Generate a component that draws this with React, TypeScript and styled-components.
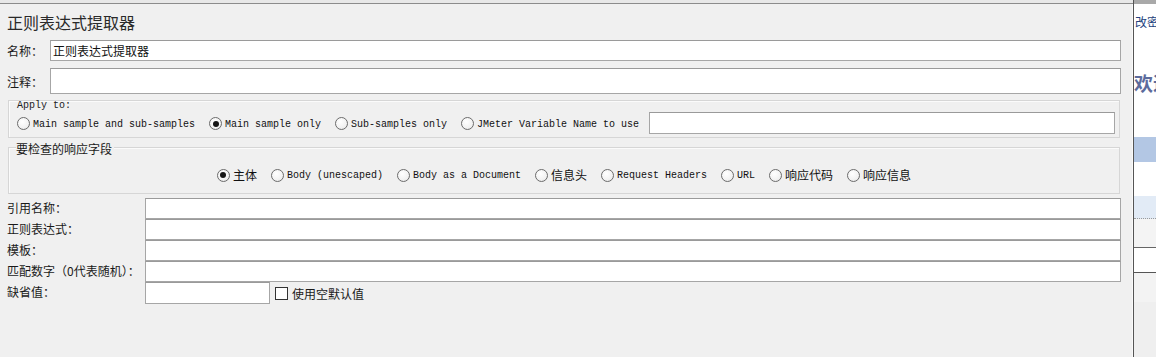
import React from "react";
import styled, { createGlobalStyle } from "styled-components";

const GlobalStyle = createGlobalStyle`
  html, body {
    margin: 0;
    padding: 0;
    background: #f0f0f0;
  }
  body {
    font-family: "Noto Sans CJK SC", "Liberation Sans", sans-serif;
    font-size: 12px;
    color: #1a1a1a;
  }
  * {
    box-sizing: border-box;
  }
`;

const applyOptions = [
  { label: "Main sample and sub-samples", on: false },
  { label: "Main sample only", on: true },
  { label: "Sub-samples only", on: false },
  { label: "JMeter Variable Name to use", on: false }
];

const fieldOptions = [
  { label: "主体", cjk: true, on: true },
  { label: "Body (unescaped)", cjk: false, on: false },
  { label: "Body as a Document", cjk: false, on: false },
  { label: "信息头", cjk: true, on: false },
  { label: "Request Headers", cjk: false, on: false },
  { label: "URL", cjk: false, on: false },
  { label: "响应代码", cjk: true, on: false },
  { label: "响应信息", cjk: true, on: false }
];

const fieldRows = ["引用名称：", "正则表达式：", "模板：", "匹配数字（0代表随机）："];

export default function App() {
  return (
    <>
      <GlobalStyle />
      <Window>
        <MainColumn>
          <TopEdge />
          <MainRow>
            <Editor>
              <Title>正则表达式提取器</Title>
              <FormRow $h={21}>
                <RowLabel>名称：</RowLabel>
                <TextBox defaultValue="正则表达式提取器" />
              </FormRow>
              <FormRow $h={26} $top={7}>
                <RowLabel>注释：</RowLabel>
                <TextBox />
              </FormRow>

              <ApplyGroup>
                <MonoTitle>Apply to:</MonoTitle>
                <ApplyRow>
                  {applyOptions.map((o) => (
                    <Option key={o.label}>
                      <RadioDot $on={o.on} />
                      <OptionText>{o.label}</OptionText>
                    </Option>
                  ))}
                  <VarBox />
                </ApplyRow>
              </ApplyGroup>

              <FieldGroup>
                <GroupTitle>要检查的响应字段</GroupTitle>
                <FieldRadios>
                  {fieldOptions.map((o) => (
                    <Option key={o.label}>
                      <RadioDot $on={o.on} />
                      <OptionText $cjk={o.cjk}>{o.label}</OptionText>
                    </Option>
                  ))}
                </FieldRadios>
              </FieldGroup>

              <FieldGrid>
                {fieldRows.map((l) => (
                  <React.Fragment key={l}>
                    <GridLabel>{l}</GridLabel>
                    <TextBox />
                  </React.Fragment>
                ))}
                <GridLabel>缺省值：</GridLabel>
                <DefaultCell>
                  <ShortBox />
                  <CheckBox />
                  <CheckText>使用空默认值</CheckText>
                </DefaultCell>
              </FieldGrid>
            </Editor>
            <Splitter />
          </MainRow>
        </MainColumn>

        <SidePanel>
          <SideBand $h={4} $bg="#a9a9a9" />
          <SideLink>改密</SideLink>
          <SideHeading>欢迎</SideHeading>
          <SideBand $h={25} $bg="#b3c7e4" />
          <SideBand $h={34} $bg="#ffffff" />
          <SideBand $h={23} $bg="#e2ebf6" $line="1px dotted #9a9a9a" />
          <SideBand $h={29} $bg="#f4f4f4" $line="1px solid #666666" />
          <SideBand $h={25} $bg="#ffffff" $line="1px solid #555555" />
          <SideBand $h={29} $bg="#f3f3f3" />
          <SideRest />
        </SidePanel>
      </Window>
    </>
  );
}

const Window = styled.div`
  display: flex;
  width: 1156px;
  height: 357px;
  overflow: hidden;
  background: #f0f0f0;
`;

const MainColumn = styled.div`
  width: 1133px;
  flex: none;
  display: flex;
  flex-direction: column;
`;

const TopEdge = styled.div`
  height: 4px;
  background: #e8e8e8;
  border-bottom: 1px solid #8c8c8c;
`;

const MainRow = styled.div`
  display: flex;
  flex: 1;
`;

const Editor = styled.div`
  width: 1122px;
  flex: none;
  display: flex;
  flex-direction: column;
  padding: 0 1px 0 7px;
`;

const Splitter = styled.div`
  flex: 1;
  background: #f0f0f0;
  border-right: 1px solid #fafafa;
`;

const Title = styled.div`
  height: 36px;
  line-height: 36px;
  font-size: 16px;
  color: #2a2a2a;
`;

const FormRow = styled.div<{ $h: number; $top?: number }>`
  display: flex;
  align-items: stretch;
  height: ${(p) => p.$h}px;
  margin-top: ${(p) => p.$top ?? 0}px;
`;

const RowLabel = styled.div`
  width: 43px;
  flex: none;
  display: flex;
  align-items: center;
  color: #1a1a1a;
`;

const TextBox = styled.input`
  flex: 1;
  min-width: 0;
  height: 100%;
  margin: 0;
  padding: 0 2px;
  border: 1px solid #a6a6a6;
  border-top-color: #9a9a9a;
  background: #ffffff;
  font-family: "Noto Sans CJK SC", "Liberation Sans", sans-serif;
  font-size: 12px;
  color: #111;
  outline: none;
`;

const ApplyGroup = styled.div`
  margin: 6px 1px 0;
  height: 38px;
  border: 1px solid #d6d6d6;
  box-shadow: inset 1px 1px 0 #fbfbfb;
  padding: 0 4px 0 8px;
  display: flex;
  flex-direction: column;
`;

const MonoTitle = styled.div`
  height: 10px;
  line-height: 10px;
  padding-left: 0;
  font-family: "Liberation Mono", "DejaVu Sans Mono", monospace;
  font-size: 10px;
  color: #222;
`;

const ApplyRow = styled.div`
  height: 25px;
  display: flex;
  align-items: center;
  gap: 14px;
`;

const VarBox = styled(TextBox)`
  height: 22px;
  flex: 1;
  margin-left: -4px;
  margin-top: -1px;
`;

const FieldGroup = styled.div`
  margin: 9px 1px 0;
  height: 47px;
  border: 1px solid #d6d6d6;
  box-shadow: inset 1px 1px 0 #fbfbfb;
  padding: 0 7px;
  display: flex;
  flex-direction: column;
`;

const GroupTitle = styled.div`
  align-self: flex-start;
  margin-top: -6px;
  height: 14px;
  line-height: 14px;
  padding-right: 2px;
  background: #f0f0f0;
  color: #1a1a1a;
`;

const FieldRadios = styled.div`
  height: 37px;
  padding-top: 1px;
  display: flex;
  align-items: center;
  justify-content: center;
  gap: 14px;
`;

const Option = styled.label`
  display: inline-flex;
  align-items: center;
  flex: none;
  white-space: nowrap;
`;

const RadioDot = styled.span<{ $on?: boolean }>`
  width: 13px;
  height: 13px;
  margin-right: 3px;
  flex: none;
  border-radius: 50%;
  border: 1px solid #6c6c6c;
  background: radial-gradient(circle at 40% 35%, #ffffff 0%, #f2f2f2 60%, #dedede 100%);
  display: inline-flex;
  align-items: center;
  justify-content: center;

  &::after {
    content: "";
    display: ${(p) => (p.$on ? "block" : "none")};
    width: 6px;
    height: 6px;
    border-radius: 50%;
    background: #151515;
  }
`;

const OptionText = styled.span<{ $cjk?: boolean }>`
  font-family: ${(p) =>
    p.$cjk
      ? `"Noto Sans CJK SC", "Liberation Sans", sans-serif`
      : `"Liberation Mono", "DejaVu Sans Mono", monospace`};
  font-size: ${(p) => (p.$cjk ? 12 : 10)}px;
  line-height: 14px;
  padding-top: ${(p) => (p.$cjk ? 0 : 2)}px;
  color: #111;
`;

const FieldGrid = styled.div`
  margin-top: 4px;
  display: grid;
  grid-template-columns: 138px 1fr;
  grid-template-rows: repeat(4, 21px) 22px;
`;

const GridLabel = styled.div`
  display: flex;
  align-items: center;
  padding-bottom: 3px;
  white-space: nowrap;
  color: #1a1a1a;
`;

const DefaultCell = styled.div`
  display: flex;
  align-items: center;
`;

const ShortBox = styled(TextBox)`
  flex: none;
  width: 125px;
`;

const CheckBox = styled.span`
  width: 13px;
  height: 13px;
  margin: 0 4px 0 5px;
  flex: none;
  border: 1px solid #333333;
  background: #ffffff;
`;

const CheckText = styled.span`
  color: #1a1a1a;
`;

const SidePanel = styled.div`
  flex: 1;
  display: flex;
  flex-direction: column;
  border-left: 1px solid #555555;
  background: #ffffff;
  overflow: hidden;
  white-space: nowrap;
`;

const SideBand = styled.div<{ $h: number; $bg: string; $line?: string }>`
  height: ${(p) => p.$h}px;
  flex: none;
  background: ${(p) => p.$bg};
  border-bottom: ${(p) => p.$line ?? "none"};
`;

const SideLink = styled.div`
  height: 36px;
  line-height: 36px;
  padding-left: 1px;
  font-size: 12px;
  color: #23427e;
`;

const SideHeading = styled.div`
  height: 97px;
  padding-top: 30px;
  line-height: 26px;
  font-size: 19px;
  font-weight: bold;
  color: #5c6b9c;
`;

const SideRest = styled.div`
  flex: 1;
  background: #efefef;
`;
